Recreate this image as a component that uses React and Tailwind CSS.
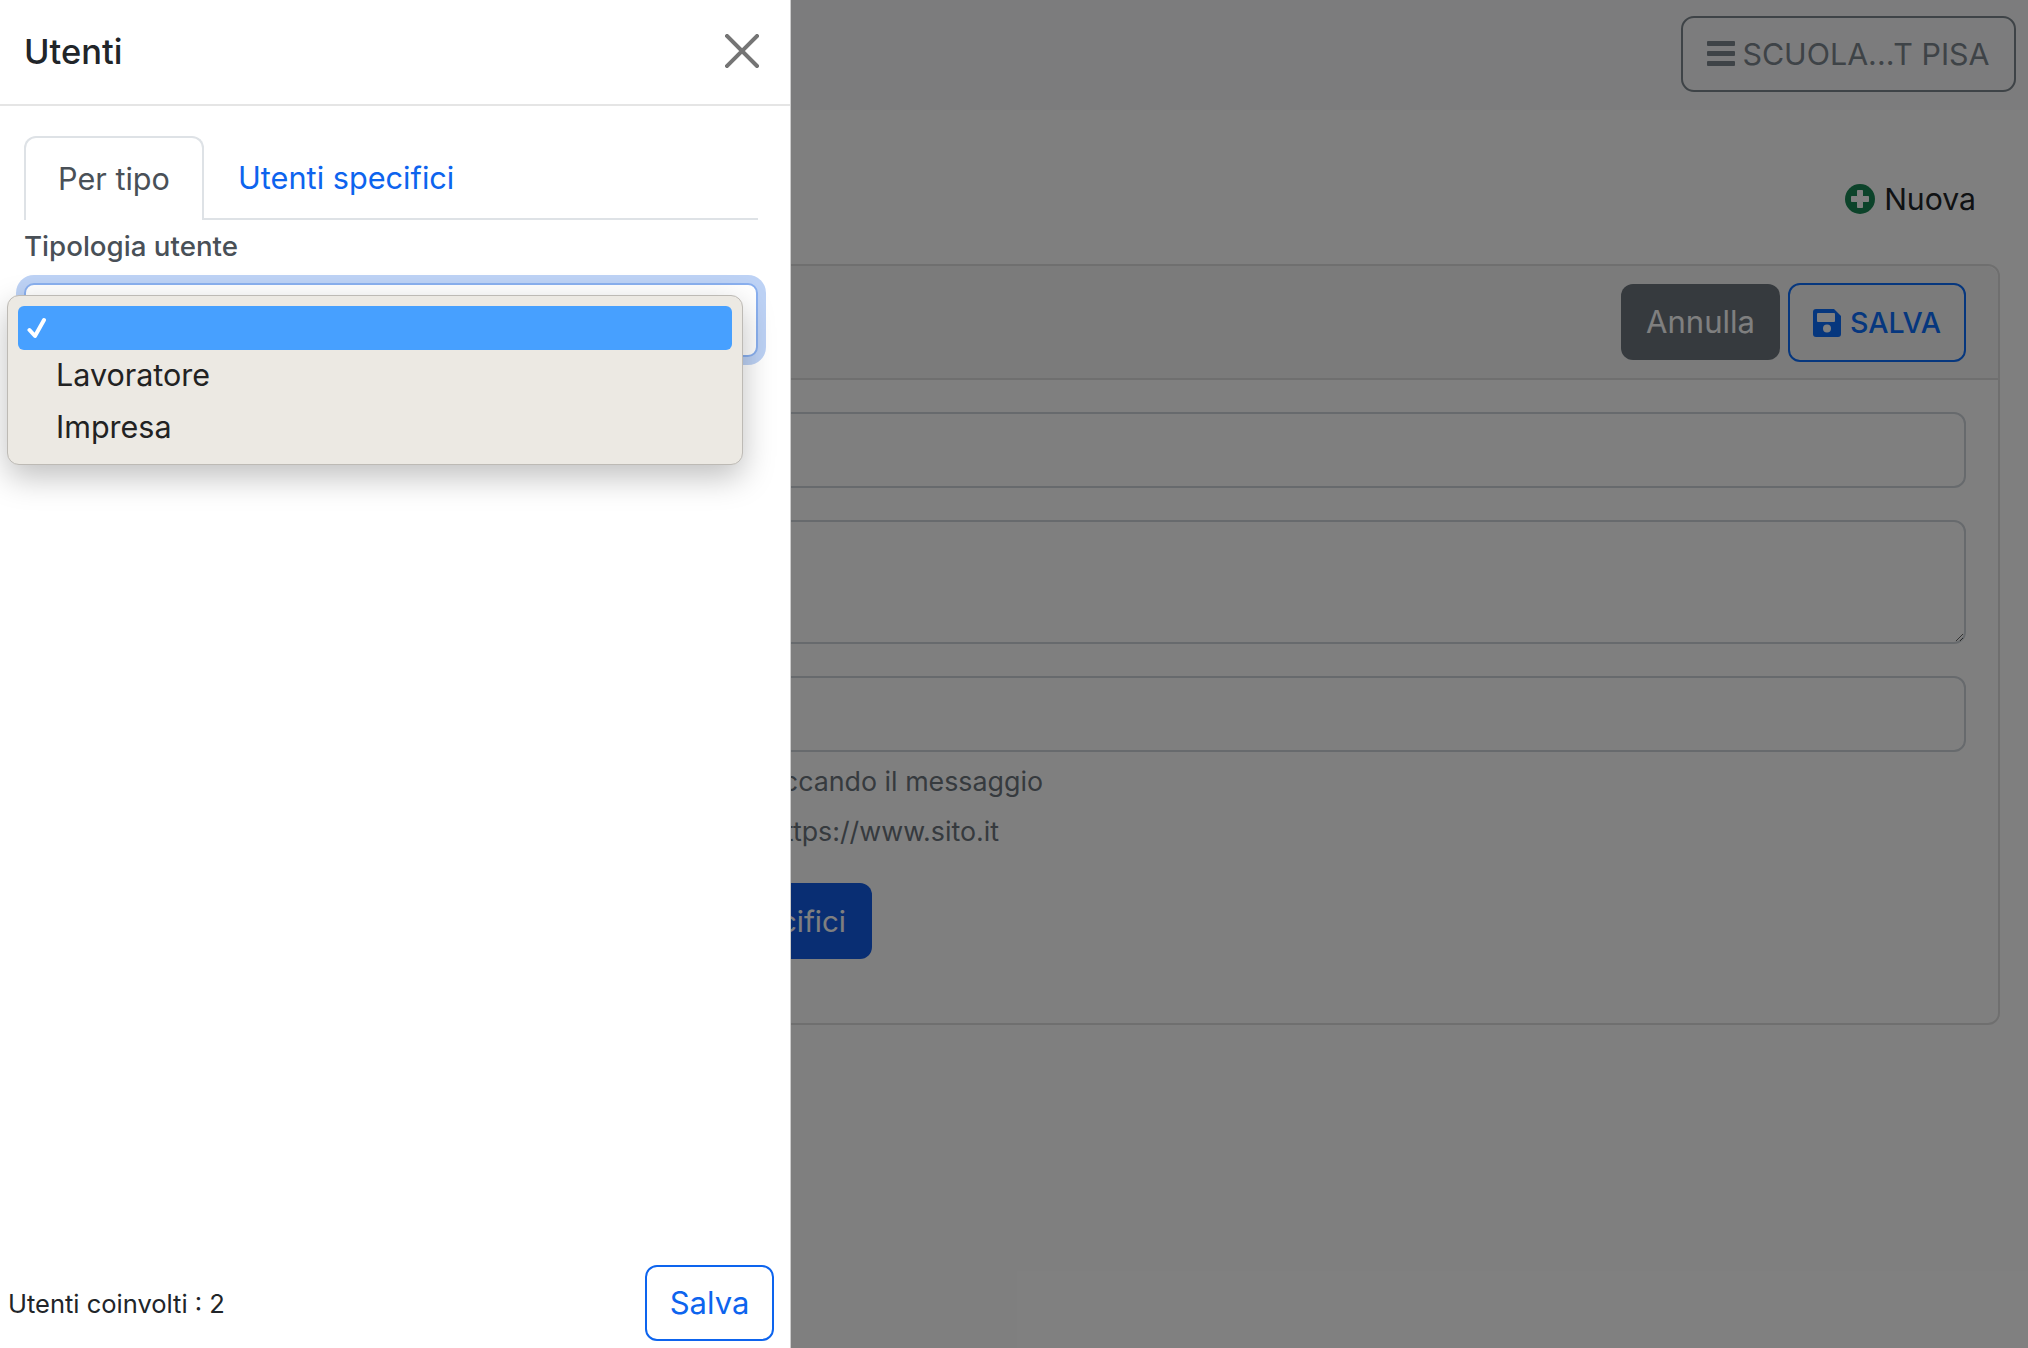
import React from "react";

const font = { fontFamily: 'Inter, "Liberation Sans", sans-serif' };

function Page() {
  return (
    <div className="flex h-full flex-col bg-white text-[#212529]">
      <nav className="flex h-[110px] shrink-0 items-center justify-end bg-[#f8f9fa] pb-[3px] pr-3">
        <button className="flex h-[76px] w-[335px] items-center justify-center gap-[7px] rounded-[13px] border-2 border-[#7d868e] text-[30.400px] text-[#7d868e]">
          <svg width="28" height="25" viewBox="0 0 28 25" fill="currentColor">
            <rect x="0" y="0" width="28" height="5" rx="1" />
            <rect x="0" y="10" width="28" height="5" rx="1" />
            <rect x="0" y="20" width="28" height="5" rx="1" />
          </svg>
          <span className="pt-[2px]">SCUOLA...T PISA</span>
        </button>
      </nav>
      <div className="flex h-[154px] shrink-0 items-end justify-end pb-[45px] pr-[52px]">
        <div className="flex items-center gap-[9px] text-[30.200px] leading-[40px]">
          <svg width="30" height="30" viewBox="0 0 30 30">
            <circle cx="15" cy="15" r="15" fill="#198754" />
            <path d="M12.500 6.500h5v6h6v5h-6v6h-5v-6h-6v-5h6z" fill="#fff" stroke="#fff" strokeWidth="1" strokeLinejoin="round" />
          </svg>
          <span>Nuova</span>
        </div>
      </div>
      <section className="ml-6 mr-7 flex h-[761px] shrink-0 flex-col rounded-[12px] border-2 border-[#dfdfdf]">
        <div className="flex h-[114px] shrink-0 items-center justify-end gap-[8px] rounded-t-[12px] border-b-2 border-[#dfdfdf] bg-[#f7f7f7] pr-[32px]">
          <button className="h-[76px] w-[159px] rounded-[12px] bg-[#6c757d] text-[31px] text-white">Annulla</button>
          <button className="flex h-[79px] w-[178px] items-center justify-center gap-[9px] rounded-[12px] border-2 border-[#0d6efd] pt-[3px] text-[28.600px] font-medium text-[#0d6efd]">
            <svg width="28" height="28" viewBox="0 0 28 28" className="-mt-[2px]">
              <path d="M3 0h18l7 7v18a3 3 0 0 1-3 3H3a3 3 0 0 1-3-3V3a3 3 0 0 1 3-3z" fill="currentColor" />
              <rect x="4" y="4" width="18" height="9" rx="1" fill="#fff" />
              <circle cx="14" cy="19.500" r="4" fill="#fff" />
            </svg>
            <span>SALVA</span>
          </button>
        </div>
        <div className="flex flex-col pl-[32px] pr-[32px]">
          <input className="mt-[32px] h-[76px] rounded-[12px] border-2 border-[#ced4da]" />
          <textarea className="mt-[32px] h-[124px] resize-y rounded-[12px] border-2 border-[#ced4da]" />
          <input className="mt-[32px] h-[76px] rounded-[12px] border-2 border-[#ced4da]" />
          <p className="mt-[4px] w-[985px] text-right text-[26.800px] leading-[50px] text-[#6c757d]">Apre la pagina indicata cliccando il messaggio</p>
          <p className="w-[941px] text-right text-[26.800px] leading-[50px] text-[#6c757d]">Indirizzo nel formato https://www.sito.it</p>
          <button className="mt-[27px] flex h-[76px] w-[814px] items-center justify-end rounded-[12px] bg-[#125de6] pr-[26px] text-[29.500px] text-white">Utenti specifici</button>
        </div>
      </section>
    </div>
  );
}

function Drawer() {
  return (
    <aside className="absolute inset-y-0 left-0 flex w-[791px] flex-col border-r border-black/20 bg-white text-[#212529]">
      <header className="flex h-[106px] shrink-0 items-center justify-between border-b-2 border-[#e5e5e5] pl-6 pr-[31px]">
        <h2 className="text-[34.500px] font-medium leading-none">Utenti</h2>
        <svg width="34" height="34" viewBox="0 0 34 34" stroke="#757575" strokeWidth="4" strokeLinecap="square" className="-mt-[2px]">
          <path d="M2 2l30 30M32 2L2 32" />
        </svg>
      </header>
      <div className="flex-1 pl-6 pr-[32px] pt-[30px]">
        <div className="flex h-[84px] border-b-2 border-[#dee2e6]">
          <div className="-mb-[2px] flex h-[84px] w-[180px] items-center justify-center rounded-t-[12px] border-2 border-b-0 border-[#dee2e6] bg-white text-[30.600px] text-[#495057]">Per tipo</div>
          <div className="flex items-center pl-[34px] pt-[2px] text-[30.700px] text-[#0d64ee]">Utenti specifici</div>
        </div>
        <label className="mt-[8px] block text-[27.700px] font-medium leading-[36px] text-[#495057]">Tipologia utente</label>
        <div className="mt-[19px] h-[74px] rounded-[10px] border-2 border-[#8ab0ef] bg-white shadow-[0_0_0_8px_#bdd2f5]" />
      </div>
      <footer className="flex h-[83px] shrink-0 items-start justify-between pl-[8px] pr-[16px]">
        <span className="pt-[20px] text-[25.500px] leading-[38px]">Utenti coinvolti : 2</span>
        <button className="h-[76px] w-[129px] rounded-[12px] border-2 border-[#0d64ee] text-[31px] text-[#0d64ee]">Salva</button>
      </footer>
      <div className="absolute left-[7px] top-[295px] h-[170px] w-[736px] rounded-[12px] border border-[#bdbab5] bg-[#ece9e3] px-[10px] pt-[10px] shadow-[0_12px_32px_rgba(0,0,0,0.25)]">
        <div className="flex h-[44px] items-center rounded-[6px] bg-[#47a0ff] pl-[9px] pt-[2px]">
          <svg width="20" height="24" viewBox="0 0 20 24" fill="none" stroke="#fff" strokeWidth="4" strokeLinecap="round" strokeLinejoin="round">
            <path d="M2.500 13l5.500 6L17 3" />
          </svg>
        </div>
        <div className="-mt-[1px] pl-[38px] text-[30.500px] leading-[52px] text-[#222]">Lavoratore</div>
        <div className="pl-[38px] text-[30.500px] leading-[52px] text-[#222]">Impresa</div>
      </div>
    </aside>
  );
}

export default function App() {
  return (
    <div className="relative h-[1348px] w-[2028px] overflow-hidden" style={font}>
      <Page />
      <div className="absolute inset-0 bg-black/50" />
      <Drawer />
    </div>
  );
}
